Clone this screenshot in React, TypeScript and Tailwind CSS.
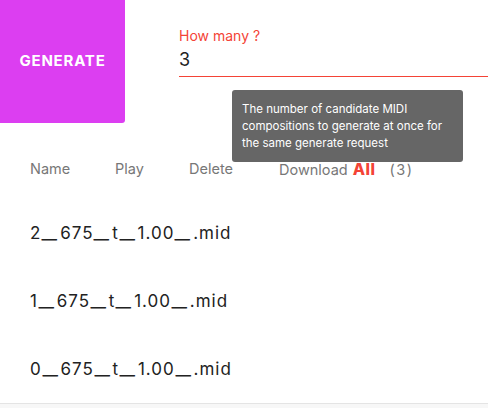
import React from "react";

const files = ["2_675_t_1.00_.mid", "1_675_t_1.00_.mid", "0_675_t_1.00_.mid"];

// underscores in the reference font are much wider than Inter's
const FileName = ({ name }: { name: string }) => {
  const parts = name.split("_");
  return (
    <>
      {parts.map((p, i) => (
        <React.Fragment key={i}>
          {p}
          {i < parts.length - 1 && (
            <span className="mx-[5px] inline-block scale-x-[2]">_</span>
          )}
        </React.Fragment>
      ))}
    </>
  );
};

export default function App() {
  return (
    <div
      className="relative h-[408px] w-[488px] overflow-hidden bg-white text-[#222]"
      style={{ fontFamily: "Inter, Roboto, sans-serif" }}
    >
      <div className="flex h-[124px]">
        <button className="flex h-[123px] w-[125px] items-center justify-center rounded-br-[3px] bg-[#dc3ef1] text-[15px] font-bold tracking-[0.8px] text-white">
          GENERATE
        </button>
        <div className="ml-[54px] flex flex-1 flex-col pt-[27px]">
          <label className="text-[14px] leading-[18px] text-[#f44336]">How many ?</label>
          <div className="mt-[3px] border-b border-[#f44336] pb-[4px] text-[18px] leading-[24px]">3</div>
        </div>
      </div>

      <div className="absolute left-[232px] top-[90px] w-[231px] rounded-[3px] bg-[#666] pb-[10px] pl-[10px] pr-[14px] pt-[11px] text-[11.5px] leading-[17px] text-white">
        The number of candidate MIDI compositions to generate at once for the same generate request
      </div>

      <div className="mt-[36px] flex pl-[30px] text-[14.5px] leading-[18px] text-[#777]">
        <span className="w-[85px]">Name</span>
        <span className="w-[74px]">Play</span>
        <span className="w-[90px]">Delete</span>
        <span className="flex items-baseline">
          Download
          <b className="ml-[5px] text-[16px] font-extrabold tracking-[0.5px] text-[#f44336]">All</b>
          <span className="ml-[14px] tracking-[1.5px]">(3)</span>
        </span>
      </div>

      <div className="mt-[43px] flex flex-col gap-[45px] pl-[30px]">
        {files.map((f) => (
          <div key={f} className="text-[17px] leading-[23px] tracking-[1px]">
            <FileName name={f} />
          </div>
        ))}
      </div>

      <div className="absolute bottom-0 left-0 right-0 h-[5px] border-t border-[#e4e4e4] bg-[#f7f7f7]" />
    </div>
  );
}
